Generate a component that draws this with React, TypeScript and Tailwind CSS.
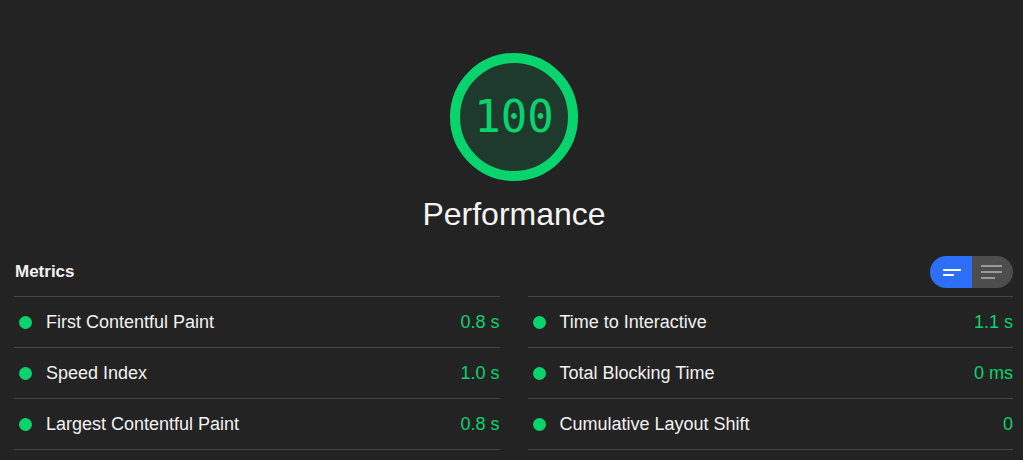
const METRICS_LEFT = [
  { label: 'First Contentful Paint', value: '0.8 s' },
  { label: 'Speed Index', value: '1.0 s' },
  { label: 'Largest Contentful Paint', value: '0.8 s' },
]

const METRICS_RIGHT = [
  { label: 'Time to Interactive', value: '1.1 s' },
  { label: 'Total Blocking Time', value: '0 ms' },
  { label: 'Cumulative Layout Shift', value: '0' },
]

function Gauge () {
  return (
    <div className="relative h-[128px] w-[128px]">
      <svg width="128" height="128" viewBox="0 0 128 128" className="absolute inset-0">
        <circle cx="64" cy="64" r="59" fill="#1e3a2d" stroke="#08d46d" strokeWidth="10" />
      </svg>
      <div className="absolute inset-0 flex items-center justify-center font-['DejaVu_Sans_Mono',monospace] text-[44px] text-[#08d46d] [font-variant-numeric:slashed-zero]">
        100
      </div>
    </div>
  )
}

function MetricColumn ({ rows }: { rows: { label: string; value: string }[] }) {
  return (
    <div className="flex flex-col border-b border-[#454545]">
      {rows.map((row) => (
        <div key={row.label} className="flex h-[51px] items-center border-t border-[#454545]">
          <span className="ml-[5px] h-[13px] w-[13px] shrink-0 rounded-full bg-[#08d46d]" />
          <span className="ml-[14px] flex-1 text-[18px] text-[#f2f2f2]">{row.label}</span>
          <span className="text-[18px] text-[#08d46d]">{row.value}</span>
        </div>
      ))}
    </div>
  )
}

export default function App () {
  return (
    <div className="h-[460px] w-full overflow-hidden bg-[#232323] font-['Liberation_Sans',Arial,sans-serif]">
      <div className="flex flex-col items-center pt-[53px] pl-[5px]">
        <Gauge />
        <div className="mt-[15px] text-[32px] leading-[37px] text-[#f5f5f5]">Performance</div>
      </div>

      <div className="pl-[14px] pr-[10px]">
        <div className="mt-[23px] mb-[8px] flex h-[32px] items-center justify-between">
          <span className="ml-px text-[17px] font-bold text-[#f2f2f2]">Metrics</span>
          <div className="flex h-[32px] w-[83px] overflow-hidden rounded-full">
            <div className="flex w-[42px] flex-col justify-center gap-[3px] bg-[#2d6ff7] pl-[13px]">
              <span className="h-[2px] w-[18px] bg-white" />
              <span className="h-[2px] w-[11px] bg-white" />
            </div>
            <div className="flex flex-1 flex-col justify-center gap-[4px] bg-[#4d4d4d] pl-[9px]">
              <span className="h-[2px] w-[21px] bg-[#999999]" />
              <span className="h-[2px] w-[21px] bg-[#999999]" />
              <span className="h-[2px] w-[14px] bg-[#999999]" />
            </div>
          </div>
        </div>

        <div className="grid grid-cols-2 gap-x-[28px]">
          <MetricColumn rows={METRICS_LEFT} />
          <MetricColumn rows={METRICS_RIGHT} />
        </div>
      </div>
    </div>
  )
}
